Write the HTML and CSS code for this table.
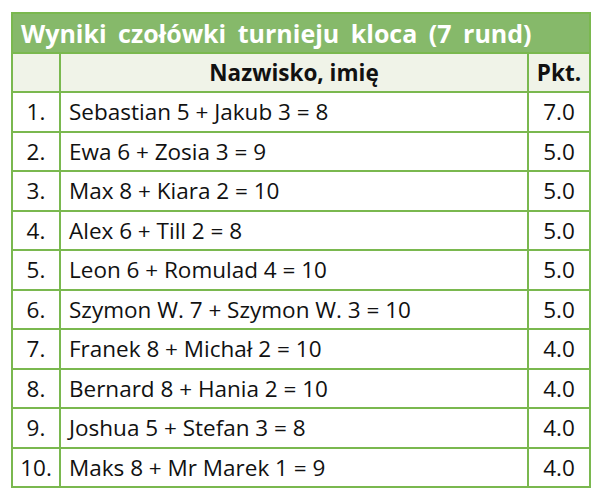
FILE: index.html
```html
<!DOCTYPE html>
<html lang="pl">
<head>
<meta charset="utf-8">
<link rel="stylesheet" href="styles.css">
</head>
<body>
<div class="wrap">
<table class="results">
<colgroup><col class="c-num"><col class="c-name"><col class="c-pts"></colgroup>
<thead>
<tr><th colspan="3" class="title">Wyniki czołówki turnieju kloca (7 rund)</th></tr>
<tr class="head"><th></th><th>Nazwisko, imię</th><th>Pkt.</th></tr>
</thead>
<tbody>
<tr><td class="num">1.</td><td class="name">Sebastian 5 + Jakub 3 = 8</td><td class="pts">7.0</td></tr>
<tr><td class="num">2.</td><td class="name">Ewa 6 + Zosia 3 = 9</td><td class="pts">5.0</td></tr>
<tr><td class="num">3.</td><td class="name">Max 8 + Kiara 2 = 10</td><td class="pts">5.0</td></tr>
<tr><td class="num">4.</td><td class="name">Alex 6 + Till 2 = 8</td><td class="pts">5.0</td></tr>
<tr><td class="num">5.</td><td class="name">Leon 6 + Romulad 4 = 10</td><td class="pts">5.0</td></tr>
<tr><td class="num">6.</td><td class="name">Szymon W. 7 + Szymon W. 3 = 10</td><td class="pts">5.0</td></tr>
<tr><td class="num">7.</td><td class="name">Franek 8 + Michał 2 = 10</td><td class="pts">4.0</td></tr>
<tr><td class="num">8.</td><td class="name">Bernard 8 + Hania 2 = 10</td><td class="pts">4.0</td></tr>
<tr><td class="num">9.</td><td class="name">Joshua 5 + Stefan 3 = 8</td><td class="pts">4.0</td></tr>
<tr><td class="num">10.</td><td class="name">Maks 8 + Mr Marek 1 = 9</td><td class="pts">4.0</td></tr>
</tbody>
</table>
</div>
</body>
</html>
```
FILE: styles.css
```css
html, body {
  margin: 0;
  background: #ffffff;
}
.wrap {
  padding: 12px 0 0 11px;
}
.results {
  width: 580px;
  border-collapse: collapse;
  table-layout: fixed;
  font-family: "Open Sans", "Noto Sans", sans-serif;
  font-size: 22.5px;
  color: #111111;
}
.c-num { width: 48px; }
.c-pts { width: 62px; }
.results th,
.results td {
  border: 2px solid #7ab84f;
  padding: 0;
}
.title {
  background: #86b96a;
  color: #ffffff;
  font-size: 25px;
  font-weight: 700;
  text-align: left;
  padding-left: 8px !important;
  height: 38px;
  word-spacing: 5px;
}
.head th {
  background: #f0f3e8;
  height: 37px;
  font-weight: 700;
  text-align: center;
}
.results td {
  height: 37.5px;
}
.num { text-align: center; }
.name { padding-left: 8px !important; }
.pts { text-align: center; }
```
